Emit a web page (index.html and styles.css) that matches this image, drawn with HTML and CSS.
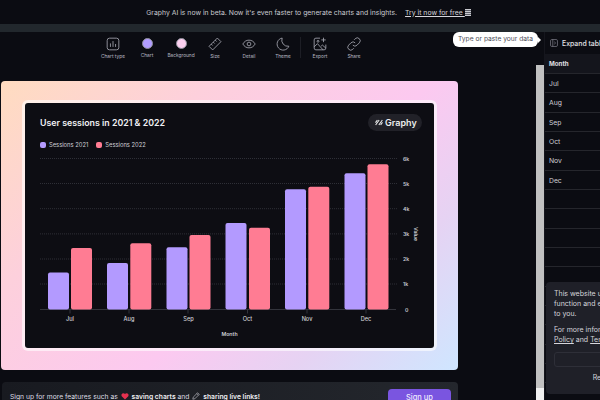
FILE: index.html

```html
<html>
<head>
    <title>Graphy</title>
    <link rel="stylesheet" href="styles.css">
</head>
<body>
    <div class="banner">
        <span>Graphy AI is now in beta. Now it's even faster to generate charts and insights.</span>
        <a class="banner-link" href="#">Try it now for free <i class="abacus"></i></a>
    </div>
    <div class="stripe"></div>

    <div class="workspace">
        <div class="left">
            <div class="toolbar">
                <div class="tool">
                    <svg viewBox="0 0 12 12"><rect x="1" y="1" width="10" height="10" rx="2"/><path d="M3.8 8.5v-3M6 8.5v-5M8.2 8.5v-2.5"/></svg>
                    <span>Chart type</span>
                </div>
                <div class="tool">
                    <div class="swatch swatch-chart"></div>
                    <span>Chart</span>
                </div>
                <div class="tool">
                    <div class="swatch swatch-bg"></div>
                    <span>Background</span>
                </div>
                <div class="tool">
                    <svg viewBox="0 0 12 12"><path d="M8 .9l3.1 3.1-7.1 7.1-3.1-3.1zM6.2 2.7l1.2 1.2M4.500 4.400l1.2 1.2M2.800 6.100l1.2 1.2"/></svg>
                    <span>Size</span>
                </div>
                <div class="tool">
                    <svg viewBox="0 0 12 12"><path d="M.7 6c1.3-2.2 3-3.3 5.3-3.300s4 1.100 5.300 3.300c-1.300 2.200-3 3.300-5.300 3.300S2 8.200.7 6z"/><circle cx="6" cy="6" r="1.600"/></svg>
                    <span>Detail</span>
                </div>
                <div class="tool">
                    <svg viewBox="0 0 12 12"><path d="M5.300.9A5.200 5.200 0 1 0 11 7.900 5.200 5.200 0 0 1 5.300.9z"/></svg>
                    <span>Theme</span>
                </div>
                <div class="tool-divider"></div>
                <div class="tool">
                    <svg viewBox="0 0 12 12"><path d="M6 1H2.500A1.500 1.500 0 0 0 1 2.500v7A1.500 1.500 0 0 0 2.500 11h7A1.500 1.500 0 0 0 11 9.500V6.500M9 .6v3.800M7.100 2.500h3.800M1 8.500l2.800-2.800 4.800 5.300M7 7.800l1-.9 3 2.600"/><circle cx="4.300" cy="3.700" r=".8"/></svg>
                    <span>Export</span>
                </div>
                <div class="tool">
                    <svg viewBox="0 0 12 12"><path d="M5 7a2.500 2.500 0 0 0 3.600 0l2-2A2.500 2.500 0 0 0 7 1.500l-.9.900M7 5a2.500 2.500 0 0 0-3.600 0l-2 2A2.500 2.500 0 0 0 5 10.500l.9-.9"/></svg>
                    <span>Share</span>
                </div>
            </div>

            <div class="content">
                <div class="canvas">
                    <div class="frame">
                        <div class="chart">
                            <div class="chart-head">
                                <div class="chart-title">User sessions in 2021 &amp; 2022</div>
                                <div class="logo">
                                    <svg viewBox="0 0 10 8"><path d="M.6 4.200L3 .8M.8 7.200L5.200.8M4.800 7.200L9.200.8M7 7.200l2.400-3.400"/></svg>
                                    <span>Graphy</span>
                                </div>
                            </div>
                            <div class="legend">
                                <div class="legend-item"><i class="dot dot-a"></i>Sessions 2021</div>
                                <div class="legend-item"><i class="dot dot-b"></i>Sessions 2022</div>
                            </div>
                            <svg class="plot" viewBox="25 150 410 197">
                                <g class="grid">
                                    <path d="M40 158.500H397M40 183.500H397M40 208.700H397M40 233.900H397M40 259H397M40 284H397"/>
                                </g>
                                <path class="axis" d="M40 309.500H396M70 309.500v4M129 309.500v4M188 309.500v4M247.500 309.500v4M307 309.500v4M366 309.500v4"/>
                                <g class="bars-a">
                                    <rect x="48" y="272.500" width="21" height="37" rx="2"/>
                                    <rect x="107" y="263" width="21" height="46.500" rx="2"/>
                                    <rect x="166.500" y="247.300" width="21" height="62.200" rx="2"/>
                                    <rect x="225.500" y="223" width="21" height="86.500" rx="2"/>
                                    <rect x="285" y="189.300" width="21" height="120.200" rx="2"/>
                                    <rect x="344.500" y="173.300" width="21" height="136.200" rx="2"/>
                                </g>
                                <g class="bars-b">
                                    <rect x="71" y="248" width="21" height="61.500" rx="2"/>
                                    <rect x="130.300" y="243.300" width="21" height="66.200" rx="2"/>
                                    <rect x="189.500" y="235" width="21" height="74.500" rx="2"/>
                                    <rect x="249" y="227.700" width="21" height="81.800" rx="2"/>
                                    <rect x="308.300" y="186.700" width="21" height="122.800" rx="2"/>
                                    <rect x="367.500" y="164.300" width="21" height="145.200" rx="2"/>
                                </g>
                                <g class="ticks">
                                    <text x="403" y="160.500">6k</text>
                                    <text x="403" y="185.500">5k</text>
                                    <text x="403" y="210.700">4k</text>
                                    <text x="403" y="236">3k</text>
                                    <text x="403" y="261">2k</text>
                                    <text x="403" y="286">1k</text>
                                    <text x="405" y="311.500">0</text>
                                </g>
                                <g class="months">
                                    <text x="70" y="321">Jul</text>
                                    <text x="129" y="321">Aug</text>
                                    <text x="188.500" y="321">Sep</text>
                                    <text x="247.500" y="321">Oct</text>
                                    <text x="307" y="321">Nov</text>
                                    <text x="366" y="321">Dec</text>
                                </g>
                                <text class="axis-title" x="229.500" y="335.500">Month</text>
                                <text class="axis-title" transform="translate(414 234) rotate(90)">Value</text>
                            </svg>
                        </div>
                    </div>
                </div>

                <div class="signup">
                    <div class="signup-text">
                        Sign up for more features such as
                        <svg class="signup-icon" viewBox="0 0 10 10"><path class="heart" d="M5 9.300L.9 5.200A2.500 2.500 0 0 1 5 2.400a2.500 2.500 0 0 1 4.100 2.800z"/></svg>
                        <b>saving charts</b> and
                        <svg class="signup-icon" viewBox="0 0 10 10"><path class="pencil" d="M7 1l2 2-5.500 5.500-2.500.5.500-2.500zM6 2l2 2"/></svg>
                        <b>sharing live links!</b>
                    </div>
                    <button class="signup-btn">Sign up</button>
                </div>
            </div>
        </div>

        <div class="scroll-col">
            <div class="scroll-thumb"></div>
            <div class="scroll-end"></div>
        </div>

        <div class="data-panel">
            <div class="expand">
                <svg viewBox="0 0 10 10"><rect x=".7" y=".7" width="8.600" height="8.600" rx="1.500"/><path d="M3.500.7v8.600M5.300 3.500L7 5 5.300 6.500"/></svg>
                Expand table
            </div>
            <div class="table-head">Month</div>
            <div class="table-row">Jul</div>
            <div class="table-row">Aug</div>
            <div class="table-row">Sep</div>
            <div class="table-row">Oct</div>
            <div class="table-row">Nov</div>
            <div class="table-row">Dec</div>
            <div class="table-row"></div>
            <div class="table-row"></div>
            <div class="table-row"></div>
            <div class="table-row"></div>
            <div class="table-row"></div>
            <div class="table-row"></div>
            <div class="table-row"></div>
            <div class="table-row"></div>
            <div class="table-row"></div>
            <div class="table-row"></div>
        </div>
    </div>

    <div class="hint">Type or paste your data</div>

    <div class="cookie">
        <p>This website uses cookies so the site can<br>function and ensure the best experience<br>to you.</p>
        <p>For more information, see our Privacy<br><u>Policy</u> and <u>Terms</u></p>
        <div class="cookie-box">Accept</div>
        <div class="cookie-reject">Reject</div>
    </div>
</body>
</html>
```

FILE: styles.css

```css
html, body {
    margin: 0;
    height: 100%;
    overflow: hidden;
}
body {
    font-family: Inter, "Liberation Sans", sans-serif;
    background: #0b0c12;
    color: #d6d6dc;
    display: flex;
    flex-direction: column;
}
.banner {
    height: 24px;
    flex: none;
    display: flex;
    justify-content: center;
    align-items: center;
    gap: 8px;
    padding-left: 17px;
    font-size: 6.850px;
    color: #c9cad0;
}
.banner-link {
    color: #d6d6dc;
    text-decoration: underline;
}
.abacus {
    display: inline-block;
    width: 6px;
    height: 7px;
    vertical-align: -1px;
    background: repeating-linear-gradient(#c9cad0 0 1px, #5c5e66 1px 2px);
}
.stripe {
    height: 8px;
    flex: none;
    background: #22282d;
}
.workspace {
    flex: 1;
    display: flex;
    min-height: 0;
}
.left {
    width: 536px;
    flex: none;
}
.toolbar {
    height: 33px;
    display: flex;
    justify-content: center;
    align-items: flex-start;
    padding: 5px 0 0 0;
    margin-left: -69px;
    box-sizing: border-box;
}
.tool {
    width: 34px;
    display: flex;
    flex-direction: column;
    align-items: center;
    gap: 2px;
    font-size: 4.800px;
    line-height: 6px;
    color: #b8b9c2;
    white-space: nowrap;
}
.tool svg {
    width: 14px;
    height: 14px;
    fill: none;
    stroke: #a9aab4;
    stroke-width: .7;
}
.tool-divider {
    width: 1px;
    height: 21px;
    margin-right: 2px;
    background: #1d1e25;
}
.swatch {
    width: 9px;
    height: 9px;
    margin: 1px 0;
    border-radius: 50%;
    border: 1.500px solid #8d8e99;
}
.swatch-chart {
    background: #b29dff;
}
.swatch-bg {
    background: #fcd0f0;
}
.content {
    padding: 16px 78px 0 1px;
}
.canvas {
    width: 457px;
    height: 289px;
    box-sizing: border-box;
    padding: 19px 21px;
    border-radius: 4px;
    background: linear-gradient(135deg, #ffdcc0 0%, #fdd0dc 28%, #fcc9f0 58%, #e6d3f3 78%, #cfe6ff 100%);
}
.frame {
    height: 100%;
    box-sizing: border-box;
    padding: 3px;
    border-radius: 6px;
    background: rgba(255, 255, 255, .6);
}
.chart {
    height: 100%;
    box-sizing: border-box;
    background: #0d0d13;
    border-radius: 3px;
    overflow: hidden;
}
.chart-head {
    display: flex;
    justify-content: space-between;
    align-items: center;
    padding: 11px 12px 0 15px;
}
.chart-title {
    font-size: 8.800px;
    font-weight: 600;
    color: #f0f0f3;
}
.logo {
    width: 54px;
    height: 17px;
    padding: 0 0 0 7px;
    box-sizing: border-box;
    display: flex;
    align-items: center;
    gap: 2px;
    border-radius: 9px;
    background: #212128;
    font-size: 9px;
    font-weight: 600;
    color: #eceded;
}
.logo svg {
    width: 8px;
    height: 7px;
    flex: none;
    fill: none;
    stroke: #eceded;
    stroke-width: 1.300;
}
.legend {
    display: flex;
    gap: 8px;
    padding: 8px 0 0 15px;
    height: 11px;
}
.legend-item {
    display: flex;
    align-items: center;
    gap: 3px;
    font-size: 5.800px;
    color: #cfcfd6;
}
.dot {
    width: 6px;
    height: 6px;
    border-radius: 2px;
}
.dot-a {
    background: #b39aff;
}
.dot-b {
    background: #ff7c93;
}
.plot {
    display: block;
    width: 410px;
    height: 197px;
}
.grid path {
    stroke: #2e2f37;
    stroke-width: 1;
    stroke-dasharray: 1 1;
    fill: none;
}
.axis {
    stroke: #33343c;
    fill: none;
}
.bars-a rect {
    fill: #b39aff;
}
.bars-b rect {
    fill: #ff7c93;
}
.ticks text {
    font-size: 5.200px;
    font-weight: 600;
    fill: #c8c8d0;
}
.months text {
    font-size: 5.600px;
    font-weight: 500;
    fill: #d0d0d6;
    text-anchor: middle;
}
.axis-title {
    font-size: 5.200px;
    font-weight: 600;
    fill: #d0d0d6;
    text-anchor: middle;
}
.signup {
    margin-top: 12px;
    width: 456px;
    height: 40px;
    margin-left: 1px;
    box-sizing: border-box;
    display: flex;
    justify-content: space-between;
    align-items: flex-start;
    padding: 7px 7px 0 8px;
    border-radius: 4px;
    background: linear-gradient(90deg, #181a20, #24272d);
}
.signup-text {
    font-size: 6.750px;
    line-height: 16px;
    white-space: nowrap;
    color: #dcdce2;
}
.signup-text b {
    font-weight: 600;
    color: #f0f0f3;
}
.signup-icon {
    width: 8px;
    height: 8px;
    vertical-align: -1px;
    margin: 0 1px;
}
.heart {
    fill: #e6314f;
}
.pencil {
    fill: none;
    stroke: #c8c8d0;
    stroke-width: .8;
}
.signup-btn {
    width: 63px;
    height: 16px;
    border: none;
    border-radius: 4px;
    padding: 0;
    background: #7a55e0;
    color: #eee9ff;
    font-family: inherit;
    font-size: 7.500px;
    font-weight: 500;
}
.scroll-col {
    width: 8px;
    flex: none;
    display: flex;
    flex-direction: column;
    padding-top: 33px;
    box-sizing: border-box;
}
.scroll-thumb {
    flex: 1;
    background: #c1c1c1;
}
.scroll-end {
    height: 12px;
    background: #f1f1f1;
}
.data-panel {
    flex: 1;
    min-width: 0;
    border-left: 1px solid #15161d;
    overflow: hidden;
}
.expand {
    height: 22px;
    display: flex;
    align-items: center;
    gap: 4px;
    padding: 0 0 0 5px;
    box-sizing: border-box;
    font-size: 6.900px;
    font-weight: 500;
    color: #e4e4e8;
    white-space: nowrap;
}
.expand svg {
    width: 8px;
    height: 8px;
    fill: none;
    stroke: #8f909a;
    stroke-width: .8;
    flex: none;
}
.table-head {
    height: 20px;
    display: flex;
    align-items: center;
    padding-left: 4px;
    box-sizing: border-box;
    background: #14151c;
    border-bottom: 1px solid #25262c;
    font-size: 6.200px;
    font-weight: 700;
    color: #e0e0e5;
}
.table-row {
    height: 19.330px;
    display: flex;
    align-items: center;
    padding: 1px 0 0 4px;
    box-sizing: border-box;
    border-bottom: 1px solid #25262c;
    font-size: 6.800px;
    color: #cfcfd6;
}
.hint {
    position: absolute;
    left: 453px;
    top: 32px;
    height: 15px;
    width: 85px;
    box-sizing: border-box;
    text-align: center;
    line-height: 15px;
    background: #fff;
    color: #4d4e57;
    font-size: 6.700px;
    border-radius: 6px;
    white-space: nowrap;
}
.hint::after {
    content: "";
    position: absolute;
    right: -3px;
    top: 5px;
    border-left: 3px solid #fff;
    border-top: 3px solid transparent;
    border-bottom: 3px solid transparent;
}
.cookie {
    position: absolute;
    left: 546px;
    top: 282px;
    width: 114px;
    height: 112px;
    box-sizing: border-box;
    padding: 7px 8px;
    background: #1f2028;
    border-radius: 4px;
    font-size: 7px;
    line-height: 10px;
    color: #d6d6dc;
    white-space: nowrap;
    overflow: hidden;
}
.cookie p {
    margin: 0 0 6px 0;
}
.cookie-box {
    height: 15px;
    margin-top: 7px;
    border: 1px solid #2e2f38;
    border-radius: 3px;
    box-sizing: border-box;
    text-align: center;
    line-height: 13px;
    color: #1f2028;
}
.cookie-reject {
    margin-top: 6px;
    text-align: center;
}
```
